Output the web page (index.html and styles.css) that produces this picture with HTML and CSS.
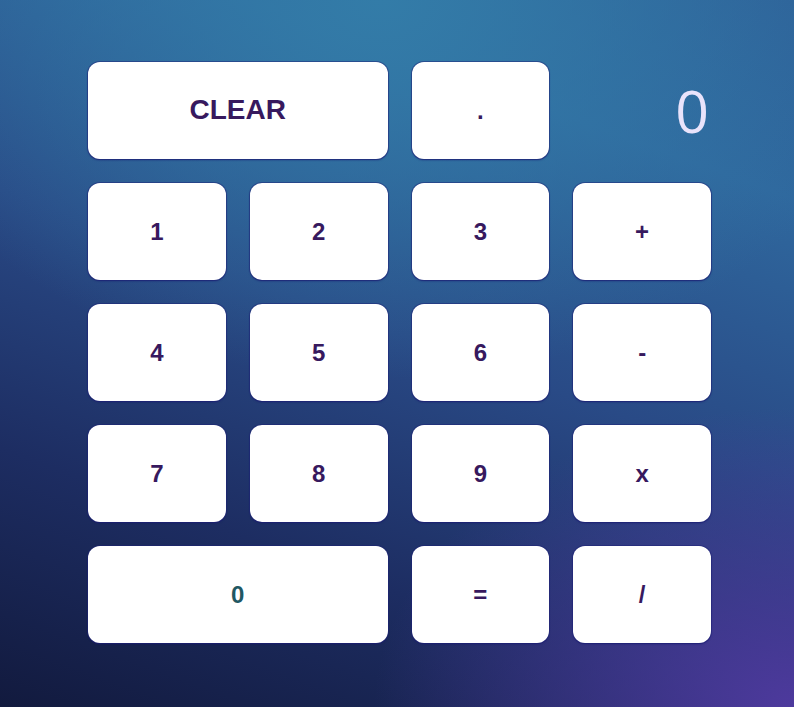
FILE: index.html
```html
<!DOCTYPE html>
<html>
<head>
<meta charset="utf-8">
<link rel="stylesheet" href="styles.css">
</head>
<body>
<div class="calc">
  <button class="key wide clear">CLEAR</button>
  <button class="key">.</button>
  <div class="display">0</div>
  <button class="key">1</button>
  <button class="key">2</button>
  <button class="key">3</button>
  <button class="key">+</button>
  <button class="key">4</button>
  <button class="key">5</button>
  <button class="key">6</button>
  <button class="key">-</button>
  <button class="key">7</button>
  <button class="key">8</button>
  <button class="key">9</button>
  <button class="key">x</button>
  <button class="key wide zero">0</button>
  <button class="key">=</button>
  <button class="key">/</button>
</div>
</body>
</html>
```
FILE: styles.css
```css
html, body {
  margin: 0;
  height: 100%;
}
body {
  width: 794px;
  height: 707px;
  overflow: hidden;
  background:
    radial-gradient(ellipse 420px 300px at 100% 100%, rgba(80,58,160,0.95) 0%, rgba(80,58,160,0) 100%),
    radial-gradient(ellipse 520px 380px at 48% 0%, rgba(51,124,168,1) 0%, rgba(51,124,168,0) 100%),
    linear-gradient(20deg, #121a3e 0%, #1d2d62 26%, #294a86 52%, #2f689e 80%, #2e6098 100%);
  font-family: "Liberation Sans", Arial, sans-serif;
  padding-top: 62px;
  box-sizing: border-box;
}
.calc {
  margin-left: 88px;
  width: 623px;
  display: grid;
  grid-template-columns: repeat(4, 1fr);
  grid-auto-rows: 97px;
  gap: 24px;
}
.key {
  background: #fff;
  border: none;
  border-radius: 12px;
  box-shadow: 0 0 0 1px rgba(30,35,120,0.45), 0 1px 2px rgba(20,20,110,0.7);
  font-family: "Liberation Sans", Arial, sans-serif;
  font-weight: 700;
  font-size: 24px;
  color: #37195e;
  padding: 0;
  margin: 0;
}
.clear {
  font-size: 28px;
  padding-bottom: 2px;
}
.wide {
  grid-column: span 2;
}
.zero {
  color: #1f5863;
}
.display {
  display: flex;
  align-items: center;
  justify-content: flex-end;
  font-family: "Open Sans", "DejaVu Sans", sans-serif;
  font-weight: 400;
  font-size: 59px;
  color: #e9e3fb;
  padding-right: 2px;
  padding-bottom: 1px;
}
```
